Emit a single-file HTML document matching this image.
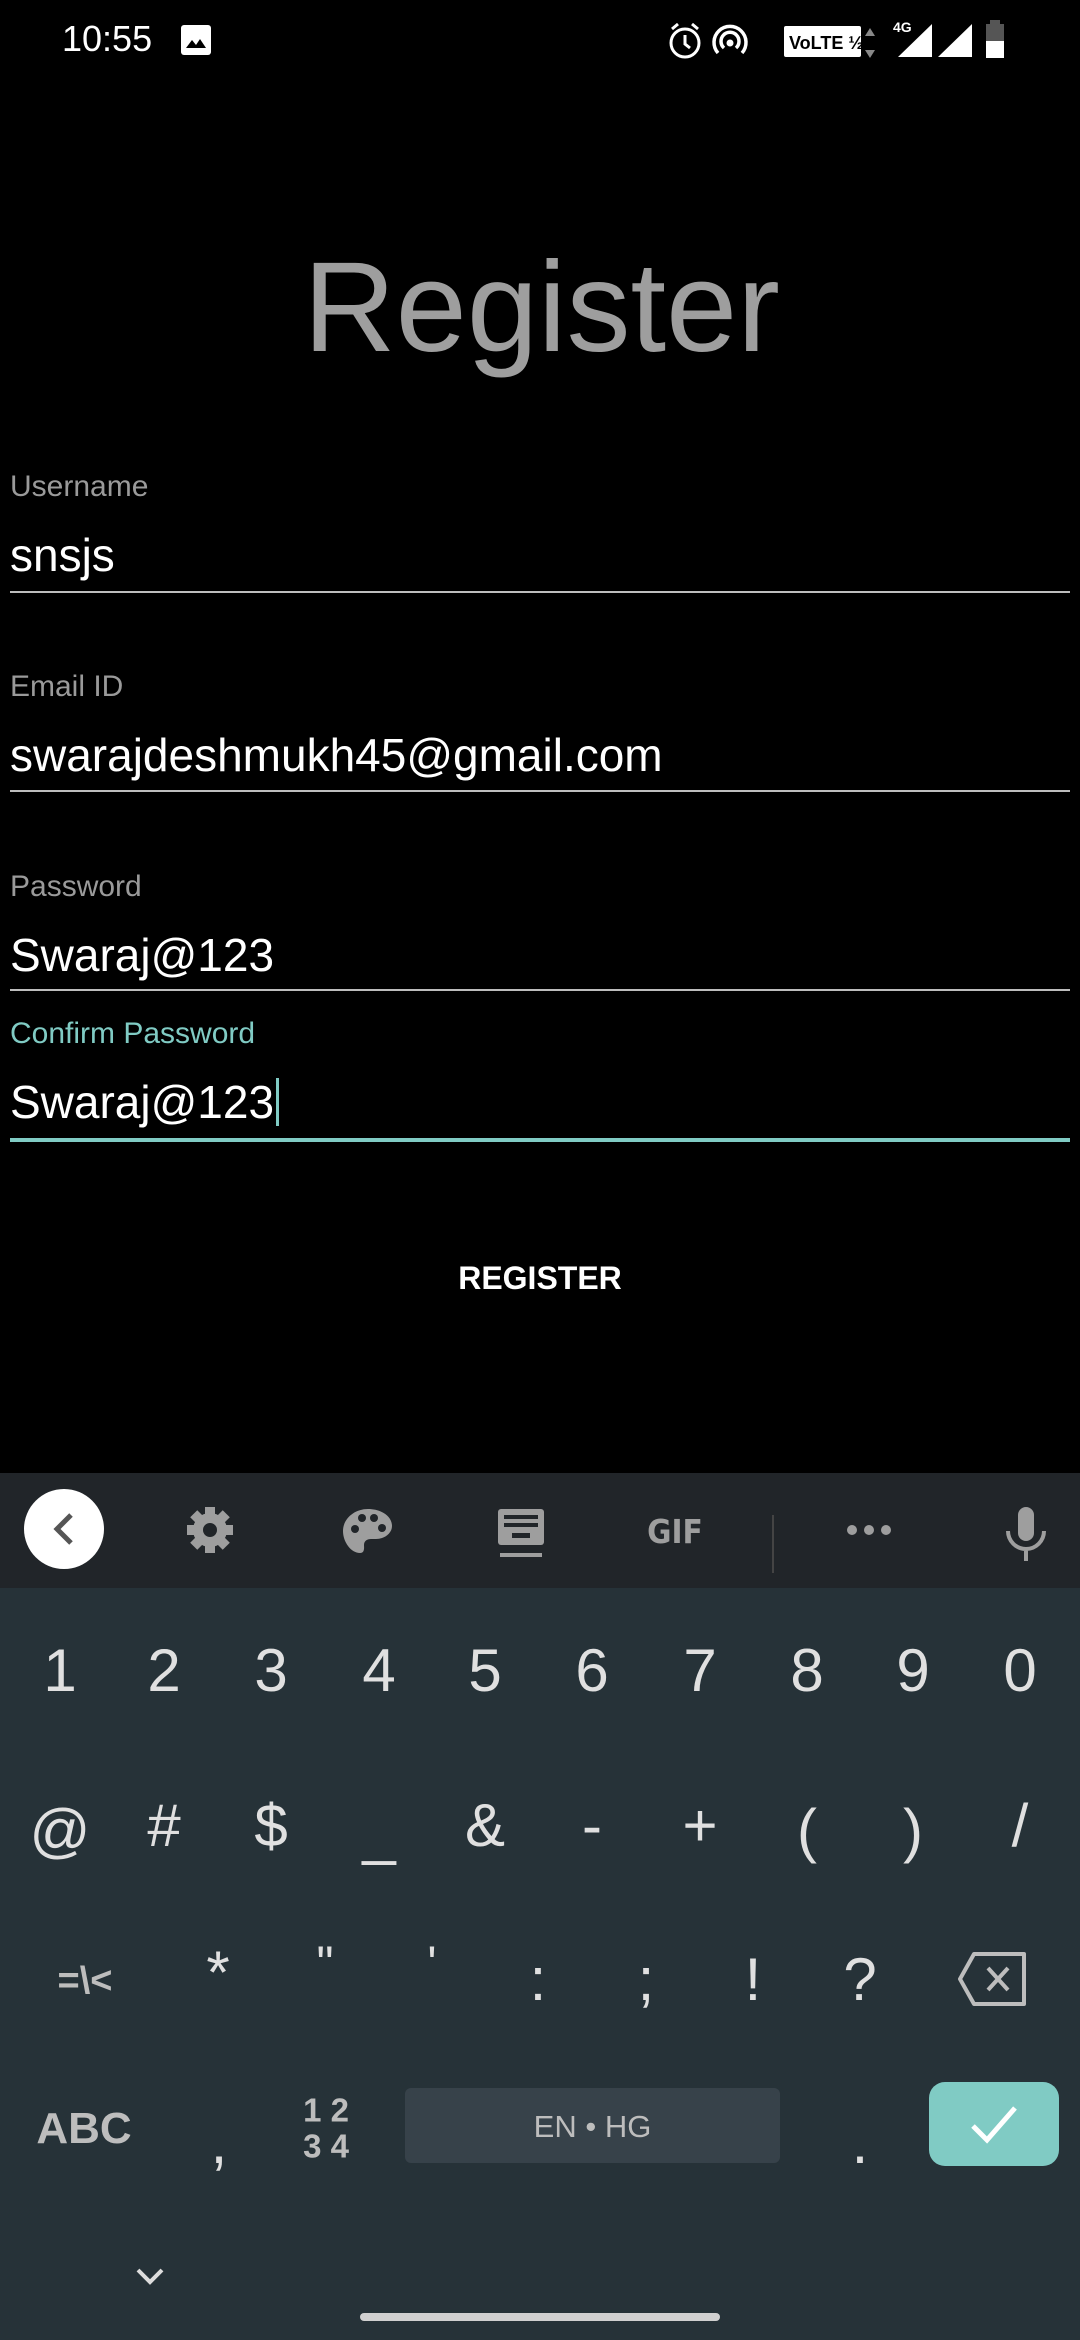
<!DOCTYPE html>
<html><head><meta charset="utf-8"><style>
*{margin:0;padding:0;box-sizing:border-box}
body{width:1080px;height:2340px;background:#000;position:relative;overflow:hidden;font-family:"Liberation Sans",sans-serif}
.a{position:absolute}
.lbl{position:absolute;left:10px;font-size:30px;color:#9a9a9a}
.val{position:absolute;left:10px;font-size:46px;color:#fff}
.line{position:absolute;left:10px;width:1060px;height:2px;background:#bdbdbd}
.k{position:absolute;color:#e0e0e0;font-size:60px;transform:translate(-50%,-50%);line-height:1;margin-top:3px}
</style></head><body>
<div class="a" style="left:62px;top:18px;font-size:36px;color:#fff">10:55</div>
<svg class="a" style="left:180px;top:24px" width="32" height="32"><rect x="1" y="1" width="30" height="30" rx="3" fill="#fff"/><path d="M6 24 L12 16 L16 21 L20 15 L26 24Z" fill="#000"/></svg>
<svg class="a" style="left:660px;top:20px" width="420" height="44">
<circle cx="25" cy="23" r="14" fill="none" stroke="#fff" stroke-width="3"/><path d="M25 15v9l5 4" stroke="#fff" stroke-width="3" fill="none"/><path d="M12 9l6-5M38 9l-6-5" stroke="#fff" stroke-width="3"/>
<path d="M58 33a16 16 0 1 1 24 0M64 28a9 9 0 1 1 12 0" stroke="#fff" stroke-width="3.5" fill="none"/><circle cx="70" cy="23" r="3.5" fill="#fff"/>
<rect x="124" y="6" width="77" height="31" rx="2" fill="#fff"/><text x="129" y="29" font-size="18" font-weight="bold" fill="#000" font-family="Liberation Sans">VoLTE ½</text>
<path d="M210 8 l-5 8h10z M210 38 l-5-8h10z" fill="#888"/>
<text x="233" y="12" font-size="14" fill="#fff" font-weight="bold">4G</text>
<path d="M272 4 L272 37 L238 37Z" fill="#fff"/>
<path d="M312 4 L312 37 L278 37Z" fill="#fff"/>
<rect x="326" y="4" width="18" height="34" fill="#555"/><rect x="330" y="0" width="10" height="5" fill="#555"/><rect x="326" y="21" width="18" height="17" fill="#fff"/>
</svg>
<div class="a" style="left:0;width:1080px;top:244px;text-align:center;font-size:128px;color:#9e9e9e;line-height:1;padding-left:3px">Register</div>
<div class="lbl" style="top:470px">Username</div>
<div class="val" style="top:528px">snsjs</div>
<div class="line" style="top:591px"></div>
<div class="lbl" style="top:670px">Email ID</div>
<div class="val" style="top:728px">swarajdeshmukh45@gmail.com</div>
<div class="line" style="top:790px"></div>
<div class="lbl" style="top:870px">Password</div>
<div class="val" style="top:928px">Swaraj@123</div>
<div class="line" style="top:989px"></div>
<div class="lbl" style="top:1017px;color:#80cbc4">Confirm Password</div>
<div class="val" style="top:1075px">Swaraj@123<span style="display:inline-block;width:3px;height:48px;background:#80cbc4;vertical-align:-8px;margin-left:2px"></span></div>
<div class="line" style="top:1138px;height:4px;background:#80cbc4"></div>
<div class="a" style="left:0;width:1080px;top:1260px;text-align:center;font-size:32px;font-weight:bold;color:#fff">REGISTER</div>
<div class="a" style="left:0;top:1473px;width:1080px;height:116px;background:#212529"></div>
<div class="a" style="left:0;top:1588px;width:1080px;height:752px;background:#263238"></div>
<svg class="a" style="left:0;top:1473px" width="1080" height="116">
<circle cx="64" cy="56" r="40" fill="#fff"/><path d="M71 42 L57 56 L71 70" stroke="#555" stroke-width="5" fill="none"/>
<g fill="#9e9e9e"><circle cx="210" cy="57" r="17"/><rect x="205" y="34" width="10" height="46"/><rect x="187" y="52" width="46" height="10"/><rect x="205" y="34" width="10" height="46" transform="rotate(45 210 57)"/><rect x="205" y="34" width="10" height="46" transform="rotate(-45 210 57)"/></g><circle cx="210" cy="57" r="7" fill="#212529"/>
<path d="M368 36c-14 0-25 10-25 22 0 11 8 22 17 22 5 0 4-6 4-8 0-4 3-6 7-6h5c9 0 16-6 16-13 0-10-11-17-24-17z" fill="#9e9e9e"/><g fill="#212529"><circle cx="355" cy="56" r="4"/><circle cx="362" cy="45" r="4"/><circle cx="374" cy="45" r="4"/><circle cx="382" cy="55" r="4"/></g>
<rect x="498" y="36" width="46" height="36" rx="3" fill="#9e9e9e"/><g fill="#212529"><rect x="504" y="42" width="34" height="4"/><rect x="504" y="50" width="34" height="4"/><rect x="512" y="60" width="18" height="5"/></g><rect x="500" y="80" width="42" height="4" fill="#9e9e9e"/>
<text x="675" y="70" font-size="33" font-weight="bold" fill="#9e9e9e" text-anchor="middle" font-family="DejaVu Sans Condensed,Liberation Sans">GIF</text>
<rect x="772" y="42" width="2" height="58" fill="#444"/>
<g fill="#9e9e9e"><circle cx="852" cy="57" r="5"/><circle cx="869" cy="57" r="5"/><circle cx="886" cy="57" r="5"/></g>
<rect x="1018" y="34" width="16" height="34" rx="8" fill="#9e9e9e"/><path d="M1008 58a18 18 0 0 0 36 0M1026 76v12" stroke="#9e9e9e" stroke-width="4" fill="none"/>
</svg>
<div class="k" style="left:60px;top:1668px">1</div><div class="k" style="left:164px;top:1668px">2</div><div class="k" style="left:271px;top:1668px">3</div><div class="k" style="left:379px;top:1668px">4</div><div class="k" style="left:485px;top:1668px">5</div><div class="k" style="left:592px;top:1668px">6</div><div class="k" style="left:700px;top:1668px">7</div><div class="k" style="left:807px;top:1668px">8</div><div class="k" style="left:913px;top:1668px">9</div><div class="k" style="left:1020px;top:1668px">0</div>
<div class="k" style="left:60px;top:1828px">@</div><div class="k" style="left:164px;top:1823px">#</div><div class="k" style="left:271px;top:1823px">$</div><div class="k" style="left:379px;top:1830px">_</div><div class="k" style="left:485px;top:1823px">&amp;</div><div class="k" style="left:592px;top:1823px">-</div><div class="k" style="left:700px;top:1823px">+</div><div class="k" style="left:807px;top:1828px">(</div><div class="k" style="left:913px;top:1828px">)</div><div class="k" style="left:1020px;top:1823px">/</div>
<div class="k" style="left:85px;top:1978px;font-size:38px;color:#bdbdbd;font-weight:bold">=\&lt;</div><div class="k" style="left:218px;top:1970px">*</div><div class="k" style="left:325px;top:1962px;font-size:48px">"</div><div class="k" style="left:432px;top:1962px;font-size:48px">'</div><div class="k" style="left:538px;top:1977px">:</div><div class="k" style="left:646px;top:1977px">;</div><div class="k" style="left:753px;top:1977px">!</div><div class="k" style="left:860px;top:1977px">?</div>
<svg class="a" style="left:958px;top:1952px" width="72" height="54"><path d="M16 2H66V52H16L2 27Z" stroke="#bdbdbd" stroke-width="4" fill="none" stroke-linejoin="round"/><path d="M30 16l20 22M50 16L30 38" stroke="#bdbdbd" stroke-width="4"/></svg>
<div class="k" style="left:84px;top:2126px;font-size:44px;color:#bdbdbd;font-weight:bold">ABC</div>
<div class="k" style="left:219px;top:2140px">,</div>
<div class="k" style="left:326px;top:2126px;font-size:33px;line-height:1.1;text-align:center;color:#bdbdbd;font-weight:bold">1 2<br>3 4</div>
<div class="a" style="left:405px;top:2088px;width:375px;height:75px;background:#37424a;border-radius:6px;color:#bdbdbd;font-size:31px;text-align:center;line-height:77px">EN • HG</div>
<div class="k" style="left:860px;top:2140px">.</div>
<div class="a" style="left:929px;top:2082px;width:130px;height:84px;background:#80cbc4;border-radius:16px"></div>
<svg class="a" style="left:969px;top:2100px" width="50" height="50"><path d="M4 26L18 40L46 8" stroke="#fff" stroke-width="5" fill="none"/></svg>
<svg class="a" style="left:135px;top:2266px" width="30" height="20"><path d="M3 4l12 12 12-12" stroke="#ddd" stroke-width="4" fill="none"/></svg>
<div class="a" style="left:360px;top:2313px;width:360px;height:8px;border-radius:4px;background:#d0d0d0"></div>
</body></html>
